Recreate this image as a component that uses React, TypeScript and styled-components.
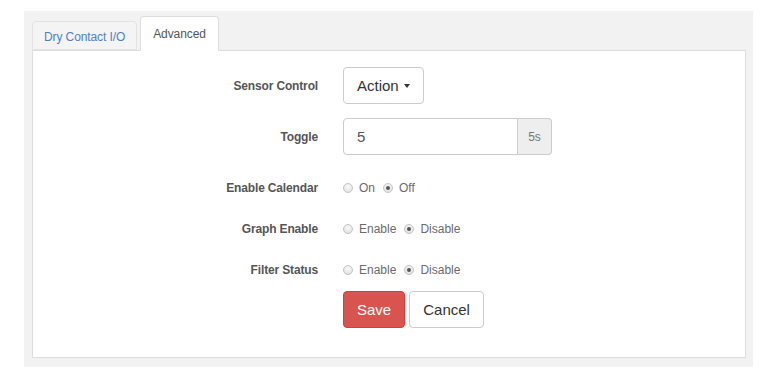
import React from "react";
import styled, { createGlobalStyle } from "styled-components";

const GlobalStyle = createGlobalStyle`
  html, body {
    margin: 0;
    padding: 0;
    background: #ffffff;
    font-family: "Liberation Sans", Arial, sans-serif;
  }
`;

const Page = styled.div`
  width: 761px;
  height: 377px;
  padding: 11px 8px 0 24px;
  box-sizing: border-box;
`;

const Shell = styled.div`
  background: #f2f2f2;
  padding: 5px 7px 9px 8px;
`;

const TabList = styled.ul`
  display: flex;
  align-items: flex-end;
  list-style: none;
  margin: 0;
  padding: 0;
  height: 34px;
`;

interface TabProps {
  $active?: boolean;
}

const Tab = styled.li<TabProps>`
  box-sizing: border-box;
  margin-right: 3px;
  margin-bottom: ${({ $active }) => ($active ? "-1px" : "0")};
  height: ${({ $active }) => ($active ? "35px" : "29px")};
  padding: ${({ $active }) => ($active ? "10px 12px 0" : "8px 11px 0")};
  font-size: 12px;
  letter-spacing: -0.1px;
  color: ${({ $active }) => ($active ? "#555555" : "#4f81c2")};
  background: ${({ $active }) => ($active ? "#ffffff" : "#f4f4f4")};
  border: 1px solid ${({ $active }) => ($active ? "#dddddd" : "#e3e3e3")};
  border-bottom-color: ${({ $active }) => ($active ? "#ffffff" : "#e3e3e3")};
  border-radius: 4px 4px 0 0;
  cursor: pointer;
  position: relative;
  z-index: ${({ $active }) => ($active ? 1 : 0)};
`;

const Pane = styled.div`
  background: #ffffff;
  border: 1px solid #dddddd;
  padding: 16px 0 29px;
`;

interface RowProps {
  $gap?: number;
  $height: number;
}

const FormRow = styled.div<RowProps>`
  display: grid;
  grid-template-columns: 285px 1fr;
  column-gap: 25px;
  align-items: center;
  height: ${({ $height }) => $height}px;
  margin-top: ${({ $gap = 0 }) => $gap}px;
`;

const Label = styled.label`
  text-align: right;
  font-size: 12px;
  font-weight: bold;
  letter-spacing: -0.15px;
  color: #555555;
`;

const Controls = styled.div`
  display: flex;
  align-items: center;
`;

interface ButtonProps {
  $variant?: "default" | "danger";
}

const Button = styled.button<ButtonProps>`
  box-sizing: border-box;
  height: 37px;
  padding: 0 13px;
  font-family: "Liberation Sans", Arial, sans-serif;
  font-size: 15px;
  border-radius: 4px;
  display: inline-flex;
  align-items: center;
  border: 1px solid
    ${({ $variant }) => ($variant === "danger" ? "#d43f3a" : "#cccccc")};
  background: ${({ $variant }) =>
    $variant === "danger" ? "#d9534f" : "#ffffff"};
  color: ${({ $variant }) => ($variant === "danger" ? "#ffffff" : "#333333")};
  margin-right: 4px;
`;

const Caret = styled.span`
  display: inline-block;
  width: 0;
  height: 0;
  margin-left: 5px;
  border-top: 4px solid #333333;
  border-left: 3.5px solid transparent;
  border-right: 3.5px solid transparent;
`;

const InputGroup = styled.div`
  display: flex;
  width: 209px;
  height: 37px;
`;

const TextInput = styled.input`
  flex: 1;
  min-width: 0;
  box-sizing: border-box;
  height: 37px;
  padding: 0 13px;
  font-family: "Liberation Sans", Arial, sans-serif;
  font-size: 15px;
  color: #555555;
  border: 1px solid #cccccc;
  border-radius: 4px 0 0 4px;
  outline: none;
`;

const Addon = styled.span`
  box-sizing: border-box;
  width: 34px;
  display: flex;
  align-items: center;
  justify-content: center;
  font-size: 12px;
  color: #777777;
  background: #eeeeee;
  border: 1px solid #cccccc;
  border-left: none;
  border-radius: 0 4px 4px 0;
`;

const RadioOption = styled.label`
  display: inline-flex;
  align-items: center;
  font-size: 12px;
  color: #6b6b6b;
  margin-right: 8px;
`;

interface DotProps {
  $checked?: boolean;
}

const RadioDot = styled.span<DotProps>`
  box-sizing: border-box;
  width: 10px;
  height: 10px;
  border-radius: 50%;
  border: 1px solid #c4c4c4;
  background: radial-gradient(circle at 50% 35%, #fafafa, #dcdcdc);
  margin-right: 6px;
  display: flex;
  align-items: center;
  justify-content: center;
  &::after {
    content: "";
    display: ${({ $checked }) => ($checked ? "block" : "none")};
    width: 4px;
    height: 4px;
    border-radius: 50%;
    background: #555555;
  }
`;

interface RadioGroupProps {
  options: string[];
  selected: string;
}

const RadioGroup: React.FC<RadioGroupProps> = ({ options, selected }) => (
  <Controls>
    {options.map((opt) => (
      <RadioOption key={opt}>
        <RadioDot $checked={opt === selected} />
        {opt}
      </RadioOption>
    ))}
  </Controls>
);

const App: React.FC = () => (
  <>
    <GlobalStyle />
    <Page>
      <Shell>
        <TabList>
          <Tab>Dry Contact I/O</Tab>
          <Tab $active>Advanced</Tab>
        </TabList>
        <Pane>
          <FormRow $height={37}>
            <Label>Sensor Control</Label>
            <Controls>
              <Button>
                Action
                <Caret />
              </Button>
            </Controls>
          </FormRow>
          <FormRow $height={37} $gap={14}>
            <Label>Toggle</Label>
            <InputGroup>
              <TextInput defaultValue="5" />
              <Addon>5s</Addon>
            </InputGroup>
          </FormRow>
          <FormRow $height={20} $gap={23}>
            <Label>Enable Calendar</Label>
            <RadioGroup options={["On", "Off"]} selected="Off" />
          </FormRow>
          <FormRow $height={20} $gap={21}>
            <Label>Graph Enable</Label>
            <RadioGroup options={["Enable", "Disable"]} selected="Disable" />
          </FormRow>
          <FormRow $height={20} $gap={21}>
            <Label>Filter Status</Label>
            <RadioGroup options={["Enable", "Disable"]} selected="Disable" />
          </FormRow>
          <FormRow $height={37} $gap={11}>
            <span />
            <Controls>
              <Button $variant="danger">Save</Button>
              <Button>Cancel</Button>
            </Controls>
          </FormRow>
        </Pane>
      </Shell>
    </Page>
  </>
);

export default App;
